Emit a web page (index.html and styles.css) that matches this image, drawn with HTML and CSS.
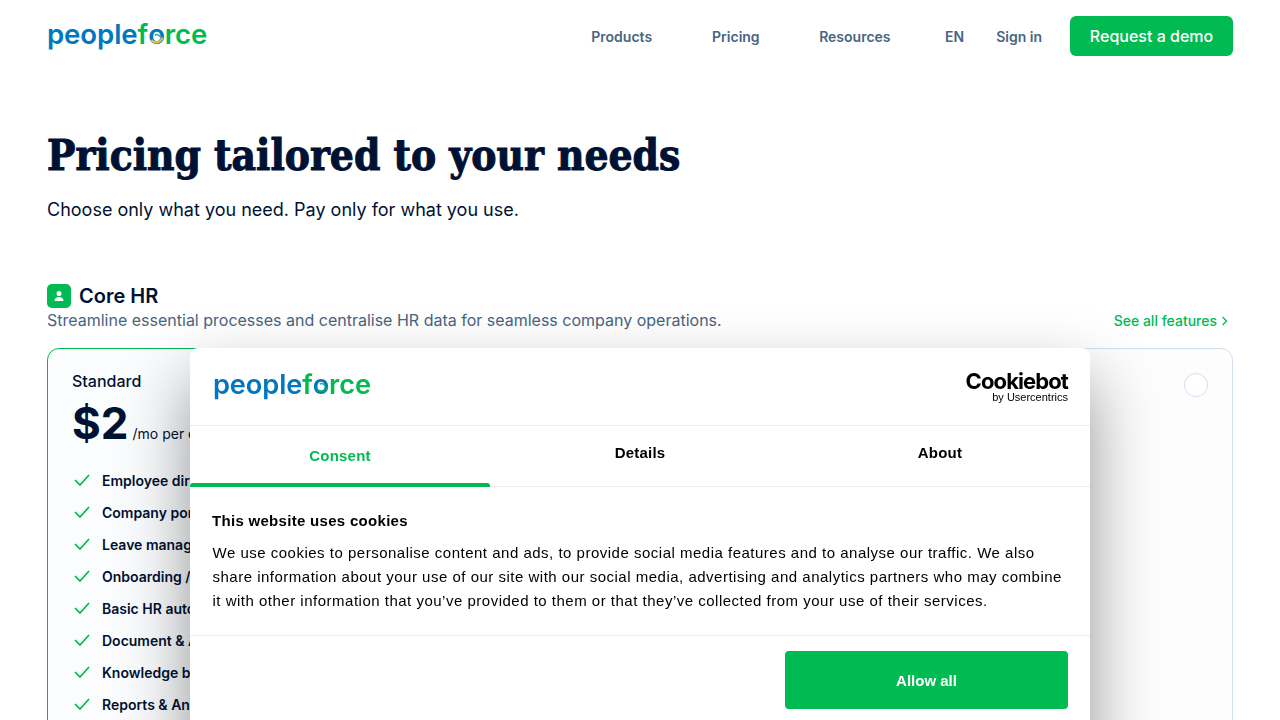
FILE: index.html
```html
<!DOCTYPE html>
<html lang="en">
<head>
<meta charset="utf-8">
<title>Pricing</title>
<link rel="stylesheet" href="styles.css">
</head>
<body>
<div class="page">
  <header class="nav">
    <a class="logo logo-nav"><span class="lb">people</span><span class="lg">f</span><span class="lo">o<svg viewBox="0 0 20 20"><path d="M4 13a7.5 7.5 0 0 0 13-3" fill="none" stroke="#e3c23a" stroke-width="2.6"/><path d="M8 7a4.5 4.5 0 0 1 6 2" fill="none" stroke="#0fb5a0" stroke-width="2"/></svg></span><span class="lg">rce</span></a>
    <nav class="links">
      <a class="l1">Products</a>
      <a class="l2">Pricing</a>
      <a class="l3">Resources</a>
      <a class="l4">EN</a>
      <a class="l5">Sign in</a>
      <a class="demo">Request a demo</a>
    </nav>
  </header>
  <section class="hero">
    <h1>Pricing tailored to your needs</h1>
    <p>Choose only what you need. Pay only for what you use.</p>
  </section>
  <section class="core">
    <div class="core-title">
      <span class="badge"><svg viewBox="0 0 24 24" width="12" height="12"><circle cx="12" cy="7" r="5" fill="#fff"/><path d="M3 22c0-6 4-8 9-8s9 2 9 8z" fill="#fff"/></svg></span>
      <h2>Core HR</h2>
    </div>
    <div class="core-sub">
      <p>Streamline essential processes and centralise HR data for seamless company operations.</p>
      <a class="see">See all features <svg viewBox="0 0 10 12" width="8" height="10"><path d="M2 1l5 5-5 5" fill="none" stroke="#00ba52" stroke-width="1.6"/></svg></a>
    </div>
    <div class="cards">
      <article class="card card-on">
        <h3>Standard</h3>
        <div class="price"><b>$2</b><span>/mo per employee</span></div>
        <ul>
          <li><svg viewBox="0 0 16 12" width="16" height="12"><path d="M1 6l5 5 9-10" fill="none" stroke="#00ba52" stroke-width="1.7"/></svg>Employee directory</li>
          <li><svg viewBox="0 0 16 12" width="16" height="12"><path d="M1 6l5 5 9-10" fill="none" stroke="#00ba52" stroke-width="1.7"/></svg>Company portal</li>
          <li><svg viewBox="0 0 16 12" width="16" height="12"><path d="M1 6l5 5 9-10" fill="none" stroke="#00ba52" stroke-width="1.7"/></svg>Leave management</li>
          <li><svg viewBox="0 0 16 12" width="16" height="12"><path d="M1 6l5 5 9-10" fill="none" stroke="#00ba52" stroke-width="1.7"/></svg>Onboarding / Offboarding</li>
          <li><svg viewBox="0 0 16 12" width="16" height="12"><path d="M1 6l5 5 9-10" fill="none" stroke="#00ba52" stroke-width="1.7"/></svg>Basic HR automation</li>
          <li><svg viewBox="0 0 16 12" width="16" height="12"><path d="M1 6l5 5 9-10" fill="none" stroke="#00ba52" stroke-width="1.7"/></svg>Document &amp; Assets</li>
          <li><svg viewBox="0 0 16 12" width="16" height="12"><path d="M1 6l5 5 9-10" fill="none" stroke="#00ba52" stroke-width="1.7"/></svg>Knowledge base</li>
          <li><svg viewBox="0 0 16 12" width="16" height="12"><path d="M1 6l5 5 9-10" fill="none" stroke="#00ba52" stroke-width="1.7"/></svg>Reports &amp; Analytics</li>
        </ul>
      </article>
      <article class="card card-plain"><span class="radio"></span></article>
    </div>
  </section>
</div>
<aside class="modal">
  <div class="m-head">
    <a class="logo logo-modal"><span class="lb">people</span><span class="lg">f</span><span class="lo">o<svg viewBox="0 0 20 20"><path d="M4 13a7.5 7.5 0 0 0 13-3" fill="none" stroke="#0fa860" stroke-width="2.6"/><path d="M8 7a4.5 4.5 0 0 1 6 2" fill="none" stroke="#0fb5a0" stroke-width="2"/></svg></span><span class="lg">rce</span></a>
    <div class="cb"><span class="cb-name">Cookiebot</span><span class="cb-by">by Usercentrics</span></div>
  </div>
  <div class="tabs">
    <div class="tab tab-on">Consent</div>
    <div class="tab">Details</div>
    <div class="tab">About</div>
  </div>
  <div class="m-body">
    <h4>This website uses cookies</h4>
    <p>We use cookies to personalise content and ads, to provide social media features and to analyse our traffic. We also share information about your use of our site with our social media, advertising and analytics partners who may combine it with other information that you’ve provided to them or that they’ve collected from your use of their services.</p>
  </div>
  <div class="m-foot"><button class="allow">Allow all</button></div>
</aside>
</body>
</html>
```
FILE: styles.css
```css
* { box-sizing: border-box; }
html, body { margin: 0; height: 720px; overflow: hidden; background: #fff; }
body { font-family: Inter, "Liberation Sans", sans-serif; color: #001233; }
a { text-decoration: none; }
h1, h2, h3, h4, p, ul { margin: 0; padding: 0; }
ul { list-style: none; }
.page { padding: 0 47px; }
.nav { height: 72px; display: flex; align-items: center; justify-content: space-between; }
.logo { display: inline-flex; font-family: Inter, sans-serif; font-weight: 600; letter-spacing: -0.1px; line-height: 1; }
.logo-nav { font-size: 27.6px; margin-top: -2px; }
.logo-modal { font-size: 27.2px; margin-left: 1px; margin-top: -4px; }
.lb { color: #0077c0; }
.lg { color: #00ba52; }
.lo { color: #0077c0; position: relative; }
.lo svg { position: absolute; left: 0; top: 27%; width: 17px; height: 17px; }
.links { display: flex; align-items: center; font-size: 14px; font-weight: 600; color: #486581; }
.l1 { margin-right: 60px; }
.l2 { margin-right: 59.5px; }
.l3 { margin-right: 54.5px; }
.l4 { margin-right: 32px; }
.l5 { margin-right: 28px; }
.demo { width: 163px; height: 40px; border-radius: 6px; background: #00ba52; color: #fff; font-size: 16px; font-weight: 500; display: flex; align-items: center; justify-content: center; }
.hero { padding-top: 58px; }
h1 { font-family: "DejaVu Serif", serif; font-stretch: condensed; font-size: 42px; line-height: 52px; font-weight: 700; color: #001233; -webkit-text-stroke: 1px #001233; }
.hero p { margin-top: 14px; font-size: 18px; line-height: 28px; }
.core { margin-top: 60px; }
.core-title { display: flex; align-items: center; gap: 8px; }
.badge { width: 24px; height: 24px; border-radius: 5px; background: #00ba52; display: flex; align-items: center; justify-content: center; }
h2 { font-size: 20px; line-height: 24px; font-weight: 600; }
.core-sub { display: flex; justify-content: space-between; align-items: center; padding: 0 4px 2px 0; height: 25px; margin-bottom: 15px; font-size: 16px; color: #486581; }
.see { font-size: 14px; font-weight: 500; color: #00ba52; display: flex; align-items: center; gap: 4px; margin-top: 2px; }
.cards { display: flex; justify-content: space-between; }
.card { width: 379px; height: 500px; padding: 22px 24px; border: 1px solid #d3deec; border-radius: 12px; background: #fbfcfe; position: relative; }
.card-on { border-color: #00ba52; }
.card-plain { background: #fdfdfe; }
h3 { font-size: 16px; line-height: 20px; font-weight: 500; }
.price { display: flex; align-items: baseline; gap: 4px; margin-top: 8px; font-size: 14px; }
.price b { font-size: 44px; line-height: 48px; font-weight: 700; }
.price span { white-space: nowrap; }
.card ul { margin-top: 17px; }
.card li { height: 32px; display: flex; align-items: center; gap: 12px; padding-left: 2px; font-size: 14px; font-weight: 600; white-space: nowrap; }
.radio { position: absolute; right: 24px; top: 24px; width: 24px; height: 24px; border-radius: 50%; border: 1px solid #d3deec; background: #fff; }
.modal { position: fixed; left: 190px; top: 348px; width: 900px; height: 520px; background: #fff; border-radius: 8px; box-shadow: 0 32px 68px rgba(0,0,0,.42); font-family: "Liberation Sans", sans-serif; color: #000; }
.m-head { height: 78px; padding: 0 22px; display: flex; align-items: center; justify-content: space-between; border-bottom: 1px solid #ececec; }
.cb { display: flex; flex-direction: column; align-items: flex-end; color: #000; }
.cb-name { font-family: Inter, sans-serif; font-size: 22px; line-height: 20px; font-weight: 700; letter-spacing: -0.9px; }
.cb-by { font-size: 11px; line-height: 11px; margin-top: 1px; }
.tabs { display: flex; height: 61px; border-bottom: 1px solid #ececec; }
.tab { flex: 1; display: flex; align-items: center; justify-content: center; padding-bottom: 8px; font-size: 15px; font-weight: 700; letter-spacing: 0.2px; position: relative; }
.tab-on { color: #00ba52; padding-bottom: 2px; }
.tab-on::after { content: ""; position: absolute; left: 0; right: 0; bottom: -1px; height: 4px; background: #00ba52; border-radius: 3px 3px 0 0; }
.m-body { padding: 24px 22px 0; height: 149px; border-bottom: 1px solid #ececec; }
h4 { font-size: 15px; line-height: 20px; font-weight: 700; letter-spacing: 0.3px; }
.m-body p { margin-top: 10px; font-size: 15px; line-height: 24px; letter-spacing: 0.5px; padding-left: 0.5px; }
.m-foot { padding: 15px 22px; display: flex; justify-content: flex-end; }
.allow { width: 283px; height: 58px; border: 0; border-radius: 4px; background: #00ba52; color: #fff; font: 700 15px "Liberation Sans", sans-serif; }
```
